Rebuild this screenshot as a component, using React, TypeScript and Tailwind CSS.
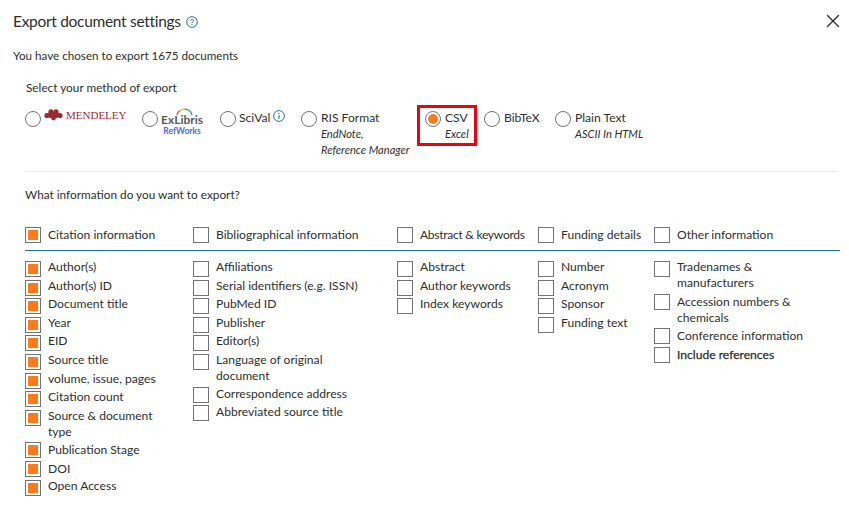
import React from 'react';
import { X } from 'lucide-react';

// rows after a wrapped label sit a pixel lower in the original
const citation: [string, boolean][] = [
  ['Author(s)', false],
  ['Author(s) ID', false],
  ['Document title', false],
  ['Year', false],
  ['EID', false],
  ['Source title', false],
  ['volume, issue, pages', false],
  ['Citation count', false],
  ['Source & document type', false],
  ['Publication Stage', true],
  ['DOI', true],
  ['Open Access', false],
];

const biblio: [string, boolean][] = [
  ['Affiliations', false],
  ['Serial identifiers (e.g. ISSN)', false],
  ['PubMed ID', false],
  ['Publisher', false],
  ['Editor(s)', false],
  ['Language of original document', false],
  ['Correspondence address', true],
  ['Abbreviated source title', true],
];

const abstracts = ['Abstract', 'Author keywords', 'Index keywords'];
const funding = ['Number', 'Acronym', 'Sponsor', 'Funding text'];

const Checkbox = ({ checked = false }: { checked?: boolean }) => (
  <span className="flex h-4 w-4 shrink-0 items-center justify-center border border-[#737373] bg-white">
    {checked && <span className="h-2.5 w-2.5 bg-[#ff7a1a]"></span>}
  </span>
);

const Radio = ({ checked = false }: { checked?: boolean }) => (
  <span className="flex h-4 w-4 shrink-0 items-center justify-center rounded-full border border-[#737373] bg-white">
    {checked && <span className="h-2.5 w-2.5 rounded-full bg-[#ff7a1a]"></span>}
  </span>
);

const Item = ({
  label,
  checked,
  className = '',
  textClass = '-mt-[2px]',
}: {
  label: string;
  checked?: boolean;
  className?: string;
  textClass?: string;
}) => (
  <label className={`flex gap-[7px] leading-4 ${className}`}>
    <Checkbox checked={checked} />
    <span className={textClass}>{label}</span>
  </label>
);

const HelpIcon = () => (
  <svg width="12" height="12" viewBox="0 0 12 12" fill="none" className="text-[#1f7396]">
    <circle cx="6" cy="6" r="5.3" stroke="currentColor" strokeWidth="1" />
    <path d="M4.5 4.8c0-.9.7-1.4 1.5-1.4s1.5.5 1.5 1.3c0 1.2-1.5 1.1-1.5 2.3" stroke="currentColor" strokeWidth="1" />
    <circle cx="6" cy="8.6" r=".65" fill="currentColor" />
  </svg>
);

const InfoIcon = () => (
  <svg width="12" height="12" viewBox="0 0 12 12" fill="none" className="text-[#1f7396]">
    <circle cx="6" cy="6" r="5.4" stroke="currentColor" strokeWidth="1" />
    <path d="M6 5.2v3.6" stroke="currentColor" strokeWidth="1.2" />
    <circle cx="6" cy="3.4" r=".7" fill="currentColor" />
  </svg>
);

const MendeleyLogo = () => (
  <svg width="19" height="12" viewBox="0 0 19 12" fill="#9c2b30">
    <circle cx="3" cy="6.5" r="2.6" />
    <circle cx="7" cy="2.8" r="2.6" />
    <circle cx="12" cy="2.8" r="2.6" />
    <circle cx="16" cy="6.5" r="2.6" />
    <circle cx="9.5" cy="9" r="2.4" />
    <path d="M5 3h9l2 4-3 2H6L3 7z" />
  </svg>
);

const ExLibrisArc = () => (
  <svg width="17" height="7" viewBox="0 0 17 7" fill="none" strokeWidth="1.4" className="absolute left-[15px] top-[-3px]">
    <path d="M1 7a7.5 6 0 0 1 3-4.5" stroke="#e8483f" />
    <path d="M4 2.5a7.5 6 0 0 1 5-1.5" stroke="#f2b632" />
    <path d="M9 1a7.5 6 0 0 1 4 1.5" stroke="#4fb06d" />
    <path d="M13 2.5a7.5 6 0 0 1 3 4.5" stroke="#3f7fd9" />
  </svg>
);

export default function App() {
  return (
    <div className="h-[508px] w-[849px] overflow-hidden bg-white pl-[13px] pr-[9px] text-[12.1px] text-[#2e2e2e] [font-family:Lato,sans-serif]">
      {/* Header */}
      <div className="flex h-[44px] items-center justify-between">
        <h2 className="flex items-center gap-[5px] text-[15.5px] font-normal tracking-[-0.3px]">
          Export document settings
          <HelpIcon />
        </h2>
        <button className="-mr-[4px] -mt-[2px] text-[#2e2e2e]">
          <X className="h-[22px] w-[22px]" strokeWidth={1.5} />
        </button>
      </div>

      <p className="mt-[4px] text-[11.65px] leading-4">You have chosen to export 1675 documents</p>

      <div className="pl-3">
        <p className="mt-[16px] pl-px text-[11.8px] leading-4">Select your method of export</p>

        {/* Export methods */}
        <div className="mt-[9px] flex h-[49px] items-start leading-4">
          <div className="flex w-[117px] gap-[3px] pt-[6px]">
            <Radio />
            <div className="-mt-[2px] flex h-[12px] items-center gap-[3px]">
              <MendeleyLogo />
              <span className="text-[11px] text-[#9c2b30] [font-family:'Liberation_Serif',serif]">MENDELEY</span>
            </div>
          </div>
          <div className="flex w-[78px] gap-[3px] pt-[6px]">
            <Radio />
            <div className="relative flex flex-col items-center font-bold leading-[11px]">
              <ExLibrisArc />
              <span className="mt-[3px] text-[12px] text-[#5a5a5a]">ExLibris</span>
              <span className="mt-px text-[8.5px] text-[#4c68d7]">RefWorks</span>
            </div>
          </div>
          <div className="flex w-[81px] gap-[3px] pt-[6px]">
            <Radio />
            <span className="-mt-[1px]">SciVal</span>
            <span className="-mt-[1px]"><InfoIcon /></span>
          </div>
          <div className="flex w-[116px] gap-[4px] pt-[6px]">
            <Radio />
            <div className="-mt-[1px]">
              <div>RIS Format</div>
              <div className="text-[11.1px] italic">EndNote,</div>
              <div className="text-[11.1px] italic">Reference Manager</div>
            </div>
          </div>
          <div className="flex h-[41px] w-[60px] gap-[4px] border-[3px] border-[#f00010] pl-[5px] pt-[3px]">
            <Radio checked />
            <div className="-mt-[1px]">
              <div>CSV</div>
              <div className="text-[11.1px] italic">Excel</div>
            </div>
          </div>
          <div className="ml-[7px] flex w-[71px] gap-[4px] pt-[6px]">
            <Radio />
            <span className="-mt-[1px]">BibTeX</span>
          </div>
          <div className="flex gap-[4px] pt-[6px]">
            <Radio />
            <div className="-mt-[1px]">
              <div>Plain Text</div>
              <div className="text-[11.1px] italic">ASCII In HTML</div>
            </div>
          </div>
        </div>

        <div className="mt-[17px] h-px w-[813px] bg-[#ececec]"></div>

        <p className="mt-[15px] text-[11.8px] leading-4">What information do you want to export?</p>

        {/* Column headers */}
        <div className="mt-[24px] grid grid-cols-[168px_204px_141px_116px_1fr] border-b border-[#1a7396] pb-[7px]">
          <Item label="Citation information" checked textClass="" />
          <Item label="Bibliographical information" textClass="" />
          <Item label="Abstract & keywords" textClass="tracking-[-0.3px]" />
          <Item label="Funding details" textClass="" />
          <Item label="Other information" textClass="" />
        </div>

        {/* Field lists */}
        <div className="mt-[10px] grid grid-cols-[168px_204px_141px_116px_1fr]">
          <div className="flex w-[140px] flex-col gap-[2.6px]">
            {citation.map(([label, lower]) => (
              <Item key={label} label={label} checked textClass={lower ? '' : '-mt-[2px]'} />
            ))}
          </div>
          <div className="flex w-[175px] flex-col gap-[2.6px]">
            {biblio.map(([label, lower]) => (
              <Item key={label} label={label} textClass={lower ? '-mt-px' : '-mt-[2px]'} />
            ))}
          </div>
          <div className="flex flex-col gap-[2.6px]">
            {abstracts.map((label) => (
              <Item key={label} label={label} />
            ))}
          </div>
          <div className="flex flex-col gap-[2.6px]">
            {funding.map((label) => (
              <Item key={label} label={label} />
            ))}
          </div>
          <div className="flex w-[152px] flex-col gap-[2.6px]">
            <Item label="Tradenames & manufacturers" />
            <Item label="Accession numbers & chemicals" textClass="" />
            <Item label="Conference information" textClass="" />
            <Item label="Include references" textClass="[-webkit-text-stroke:0.25px_#2e2e2e]" />
          </div>
        </div>
      </div>
    </div>
  );
}
